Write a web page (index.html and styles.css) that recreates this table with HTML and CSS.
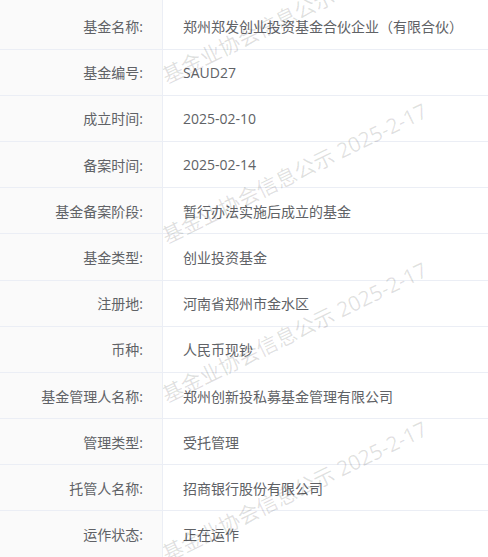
FILE: index.html
```html
<!doctype html>
<html>
    <head>
        <meta charset="utf-8">
        <title>基金信息</title>
        <link rel="stylesheet" href="styles.css">
    </head>
    <body>
        <div class="desc">
            <div class="desc-row first">
                <div class="desc-label">基金名称:</div>
                <div class="desc-value">郑州郑发创业投资基金合伙企业（有限合伙）</div>
            </div>
            <div class="desc-row">
                <div class="desc-label">基金编号:</div>
                <div class="desc-value">SAUD27</div>
            </div>
            <div class="desc-row">
                <div class="desc-label">成立时间:</div>
                <div class="desc-value">2025-02-10</div>
            </div>
            <div class="desc-row">
                <div class="desc-label">备案时间:</div>
                <div class="desc-value">2025-02-14</div>
            </div>
            <div class="desc-row">
                <div class="desc-label">基金备案阶段:</div>
                <div class="desc-value">暂行办法实施后成立的基金</div>
            </div>
            <div class="desc-row">
                <div class="desc-label">基金类型:</div>
                <div class="desc-value">创业投资基金</div>
            </div>
            <div class="desc-row">
                <div class="desc-label">注册地:</div>
                <div class="desc-value">河南省郑州市金水区</div>
            </div>
            <div class="desc-row">
                <div class="desc-label">币种:</div>
                <div class="desc-value">人民币现钞</div>
            </div>
            <div class="desc-row">
                <div class="desc-label">基金管理人名称:</div>
                <div class="desc-value">郑州创新投私募基金管理有限公司</div>
            </div>
            <div class="desc-row">
                <div class="desc-label">管理类型:</div>
                <div class="desc-value">受托管理</div>
            </div>
            <div class="desc-row">
                <div class="desc-label">托管人名称:</div>
                <div class="desc-value">招商银行股份有限公司</div>
            </div>
            <div class="desc-row">
                <div class="desc-label">运作状态:</div>
                <div class="desc-value">正在运作</div>
            </div>

            <div class="watermark">
                <span class="mark" style="top: 66px">基金业协会信息公示 2025-2-17</span>
                <span class="mark" style="top: 226px">基金业协会信息公示 2025-2-17</span>
                <span class="mark" style="top: 385px">基金业协会信息公示 2025-2-17</span>
                <span class="mark" style="top: 544px">基金业协会信息公示 2025-2-17</span>
            </div>
        </div>
    </body>
</html>
```

FILE: styles.css
```css
* {
    box-sizing: border-box;
}
html,
body {
    margin: 0;
    padding: 0;
    background-color: #fff;
}
body {
    font-family: "Open Sans", "Noto Sans CJK SC", sans-serif;
    font-size: 14px;
    color: #606266;
    overflow: hidden;
}

.desc {
    position: relative;
    height: 557px;
    overflow: hidden;
}
.desc-row {
    display: flex;
    height: 46.2px;
    border-bottom: 1px solid #ebeef5;
}
.desc-row.first {
    height: 49.6px;
    padding-top: 3px;
}
.desc-label {
    width: 163px;
    flex-shrink: 0;
    display: flex;
    align-items: center;
    justify-content: flex-end;
    padding-right: 19px;
    background-color: #fafafa;
    border-right: 1px solid #ebeef5;
}
.desc-row.first .desc-label {
    margin-top: -3px;
    padding-top: 3px;
}
.desc-value {
    flex: 1;
    display: flex;
    align-items: center;
    padding-left: 20px;
}

/* watermark over the value column */
.watermark {
    position: absolute;
    top: 0;
    left: 163px;
    right: 0;
    bottom: 0;
    overflow: hidden;
    pointer-events: none;
}
.mark {
    position: absolute;
    left: 5px;
    font-size: 21px;
    line-height: 21px;
    white-space: nowrap;
    color: rgba(0, 0, 0, 0.12);
    transform: rotate(-26deg);
    transform-origin: 0 100%;
}
```
